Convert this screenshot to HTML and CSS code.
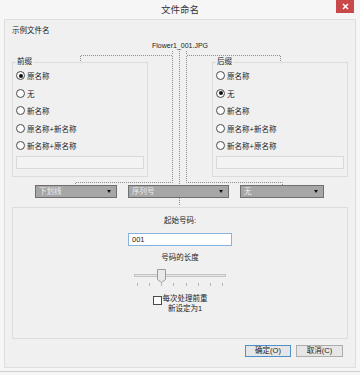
FILE: index.html
```html
<!DOCTYPE html>
<html lang="zh">

<head>
    <meta charset="UTF-8">
    <meta name="viewport" content="width=device-width, initial-scale=1.0">
    <title>文件命名</title>

    <link rel="stylesheet" href="styles.css">

</head>

<body>
    <div class="window">
        <div class="titlebar">
            <span></span>
            <span class="title">文件命名</span>
            <span class="close-btn">
                <svg width="7" height="7" viewBox="0 0 7 7">
                    <path d="M1 1L6 6M6 1L1 6" stroke="#fff" stroke-width="1.5" />
                </svg>
            </span>
        </div>

        <div class="panel">
            <div class="sample">
                <!-- dotted connectors from the sample name to the boxes -->
                <svg class="links" width="350" height="190" viewBox="5 20 350 190">
                    <g fill="none" stroke="#8e8e8e" stroke-width="1" stroke-dasharray="1 1">
                        <path d="M80.5 61V55.5H172.5V182.5H75.5V185" />
                        <path d="M280.5 61V55.5H186.5V182.5H282.5V185" />
                        <path d="M172.5 51V55M186.5 51V55" />
                        <path d="M179.5 51V185M179.5 198V205" />
                    </g>
                </svg>

                <div class="caption">示例文件名</div>
                <div class="file-name">Flower1_001.JPG</div>

                <div class="groups">
                    <fieldset class="group">
                        <legend>前缀</legend>
                        <div class="opt"><span class="radio on"></span>原名称</div>
                        <div class="opt"><span class="radio"></span>无</div>
                        <div class="opt"><span class="radio"></span>新名称</div>
                        <div class="opt"><span class="radio"></span>原名称+新名称</div>
                        <div class="opt"><span class="radio"></span>新名称+原名称</div>
                        <div class="text-field"></div>
                    </fieldset>
                    <fieldset class="group">
                        <legend>后缀</legend>
                        <div class="opt"><span class="radio"></span>原名称</div>
                        <div class="opt"><span class="radio on"></span>无</div>
                        <div class="opt"><span class="radio"></span>新名称</div>
                        <div class="opt"><span class="radio"></span>原名称+新名称</div>
                        <div class="opt"><span class="radio"></span>新名称+原名称</div>
                        <div class="text-field"></div>
                    </fieldset>
                </div>

                <div class="combos">
                    <div class="combo combo-sep">下划线<span class="arrow"></span></div>
                    <div class="combo combo-seq">序列号<span class="arrow"></span></div>
                    <div class="combo combo-end">无<span class="arrow"></span></div>
                </div>
            </div>

            <div class="number-box">
                <div class="line-label">起始号码:</div>
                <div class="start-input">001</div>
                <div class="line-label length-label">号码的长度</div>
                <svg class="slider" width="100" height="22" viewBox="0 0 100 22">
                    <rect x="4.5" y="8.5" width="91" height="2" fill="#e4e4e4" stroke="#c4c4c4" />
                    <path d="M27.5 3.5H35.5V13.5L31.5 16.5L27.5 13.5Z" fill="#e9e9e9" stroke="#9a9a9a" />
                    <g stroke="#b5b5b5">
                        <path d="M7.5 17V20M19.5 17V20M31.5 17V20M43.5 17V20M56.5 17V20M68.5 17V20M80.5 17V20M92.5 17V20" />
                    </g>
                </svg>
                <div class="check-row">
                    <span class="check"></span>
                    <span class="check-text">每次处理前重<br>新设定为1</span>
                </div>
            </div>

            <div class="buttons">
                <div class="btn btn-default">确定(O)</div>
                <div class="btn">取消(C)</div>
            </div>
        </div>
    </div>
</body>

</html>
```

FILE: styles.css
```css
* {
    box-sizing: border-box;
    font-family: "Liberation Sans", "Noto Sans CJK SC", sans-serif;
}

body {
    margin: 0;
    background-color: #f6f6f6;
    color: #222;
    font-size: 7.5px;
}

.window {
    width: 360px;
    height: 372px;
    border-bottom: 1px solid #cfcfcf;
}

.titlebar {
    height: 19px;
    display: grid;
    grid-template-columns: 1fr auto 1fr;
    align-items: start;
}

.title {
    font-size: 9.5px;
    line-height: 20px;
    color: #333;
}

.close-btn {
    justify-self: end;
    margin-right: 6px;
    width: 18px;
    height: 13px;
    background-color: #c9484a;
    display: flex;
    align-items: center;
    justify-content: center;
}

.panel {
    margin-left: 4px;
    width: 352px;
    height: 349px;
    background-color: #f0f0f0;
    border: 1px solid #dedede;
}

.sample {
    position: relative;
    padding: 6px 7px 0;
}

.links {
    position: absolute;
    left: 0;
    top: 0;
}

.caption {
    line-height: 10px;
}

.file-name {
    margin-top: 5px;
    line-height: 10px;
    text-align: center;
    font-size: 7px;
}

.groups {
    margin-top: 6px;
    display: flex;
    justify-content: space-between;
}

.group {
    margin: 0;
    width: 136px;
    padding: 0 3px 7px;
    border: 1px solid #dcdcdc;
    min-width: 0;
}

.group legend {
    padding: 0 1px;
    margin-left: 0;
    line-height: 10px;
}

.opt {
    height: 17.5px;
    display: flex;
    align-items: center;
    white-space: nowrap;
}

.radio {
    width: 9px;
    height: 9px;
    margin-right: 2px;
    border: 1px solid #4a4a4a;
    border-radius: 50%;
    background-color: #fbfbfb;
    display: flex;
    align-items: center;
    justify-content: center;
}

.radio.on::after {
    content: "";
    width: 4px;
    height: 4px;
    border-radius: 50%;
    background-color: #111;
}

.text-field {
    margin-top: 1.5px;
    height: 13px;
    border: 1px solid #d9d9d9;
    background-color: #f3f3f3;
}

.combos {
    margin-top: 8px;
    padding-left: 23px;
    display: flex;
    gap: 11px;
}

.combo {
    height: 13px;
    padding: 0 5px 0 3px;
    background-color: #a6a6a6;
    border: 1px solid #6f6f6f;
    color: #ededed;
    line-height: 11px;
    display: flex;
    align-items: center;
    justify-content: space-between;
}

.combo-sep {
    width: 82px;
}

.combo-seq {
    width: 101px;
}

.combo-end {
    width: 84px;
}

.arrow {
    width: 0;
    height: 0;
    border-left: 2.5px solid transparent;
    border-right: 2.5px solid transparent;
    border-top: 3px solid #111;
}

.number-box {
    margin: 9px 7px 0;
    height: 132px;
    border: 1px solid #dcdcdc;
    padding-top: 8px;
    display: flex;
    flex-direction: column;
    align-items: center;
}

.line-label {
    line-height: 10px;
}

.start-input {
    margin-top: 7px;
    width: 104px;
    height: 13px;
    padding-left: 3px;
    line-height: 11px;
    background-color: #fff;
    border: 1px solid #86b3e0;
}

.length-label {
    margin-top: 7px;
}

.slider {
    margin-top: 3px;
}

.check-row {
    margin-top: 6px;
    display: flex;
    align-items: flex-start;
}

.check {
    width: 9px;
    height: 9px;
    margin-top: 2px;
    margin-right: 1px;
    border: 1px solid #4a4a4a;
    background-color: #fbfbfb;
}

.check-text {
    line-height: 10px;
    text-align: center;
}

.buttons {
    margin-top: 6px;
    padding-right: 12px;
    display: flex;
    justify-content: flex-end;
    gap: 5px;
}

.btn {
    width: 47px;
    height: 12px;
    line-height: 10px;
    text-align: center;
    background-color: #e6e6e6;
    border: 1px solid #adadad;
}

.btn-default {
    width: 46px;
    border-color: #4f8fc9;
}
```
